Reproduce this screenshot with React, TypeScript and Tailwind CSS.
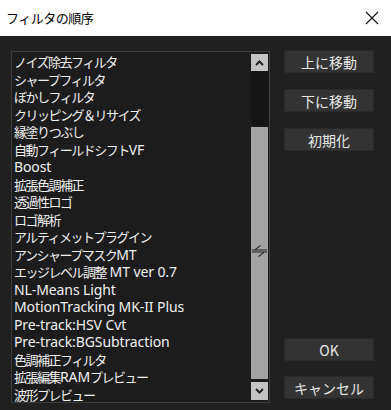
const items = [
  "ノイズ除去フィルタ",
  "シャープフィルタ",
  "ぼかしフィルタ",
  "クリッピング＆リサイズ",
  "縁塗りつぶし",
  "自動フィールドシフトVF",
  "Boost",
  "拡張色調補正",
  "透過性ロゴ",
  "ロゴ解析",
  "アルティメットプラグイン",
  "アンシャープマスクMT",
  "エッジレベル調整 MT ver 0.7",
  "NL-Means Light",
  "MotionTracking MK-II Plus",
  "Pre-track:HSV Cvt",
  "Pre-track:BGSubtraction",
  "色調補正フィルタ",
  "拡張編集RAMプレビュー",
  "波形プレビュー",
]

const cjk = { fontFamily: '"Noto Sans CJK JP", "Noto Sans", sans-serif' }
const latin = { fontFamily: '"Noto Sans", "Noto Sans CJK JP", sans-serif' }

// split a label into latin / japanese runs so each gets its own size
const Label = ({text}: {text: string}) => {
  const parts = text.match(/[\x20-\x7E]+|[^\x20-\x7E]+/g) || []
  return (
    <>
      {parts.map((p, i) =>
        /^[\x20-\x7E]+$/.test(p) ? (
          <span key={i} style={latin} className="text-[14px] tracking-[-0.1px] whitespace-pre">{p}</span>
        ) : (
          <span key={i} style={cjk} className="text-[13px] tracking-[-1.5px]">{p}</span>
        )
      )}
    </>
  )
}

const Btn = ({label}: {label: string}) => (
  <button className="w-[90px] h-[23px] bg-[#333333] border border-[#2a2a2a] text-[#e8e8e8] text-[14px] leading-none flex items-center justify-center">
    {label}
  </button>
)

const App = () => {
  return (
    <div className="w-[391px] h-[410px] bg-[#202020] flex flex-col" style={cjk}>
      <div className="h-[36px] bg-white flex items-center justify-between pl-[6px] pr-[10px]">
        <span className="text-[13px] text-black tracking-[-0.5px]">フィルタの順序</span>
        <svg width="16" height="16" viewBox="0 0 16 16" className="mr-[1px]">
          <path d="M2 2 L14 14 M14 2 L2 14" stroke="#111" strokeWidth="1.1" fill="none"/>
        </svg>
      </div>
      <div className="flex pt-[15px] pl-[11px]">
        <div className="w-[259px] h-[352px] border border-[#3c3c3c] bg-[#1c1c1c] flex">
          <ul className="flex-1 pl-[2px] pt-[1px] text-[#f0f0f0] whitespace-nowrap overflow-hidden">
            {items.map((t) => (
              <li key={t} className="h-[17.5px] flex items-center"><Label text={t} /></li>
            ))}
          </ul>
          <div className="w-[17px] flex flex-col pt-[2px] pb-[2px] mr-[1px]">
            <div className="h-[17px] bg-[#c4c4c4] flex items-center justify-center">
              <svg width="9" height="6" viewBox="0 0 9 6"><path d="M1 5 L4.5 1.5 L8 5" stroke="#222" strokeWidth="2" fill="none"/></svg>
            </div>
            <div className="h-[55px] bg-[#151515]"></div>
            <div className="flex-1 bg-[#a3a3a3] flex items-center justify-center mt-[1px]">
              <svg width="18" height="14" viewBox="0 0 18 14" className="-mt-[5px]">
                <path d="M4 6 L10 1 M1 6 L17 6 M17 8 L1 8 M14 8 L8 13" stroke="#222" strokeWidth="1.1" fill="none"/>
              </svg>
            </div>
            <div className="h-[18px] bg-[#c4c4c4] flex items-center justify-center mt-[3px]">
              <svg width="9" height="6" viewBox="0 0 9 6"><path d="M1 1 L4.5 4.5 L8 1" stroke="#222" strokeWidth="2" fill="none"/></svg>
            </div>
          </div>
        </div>
        <div className="flex flex-col ml-[14px]">
          <div className="flex flex-col gap-[16px] -mt-[1px]">
            <Btn label="上に移動" />
            <Btn label="下に移動" />
            <Btn label="初期化" />
          </div>
          <div className="flex flex-col gap-[15px] mt-[187px]">
            <Btn label="OK" />
            <Btn label="キャンセル" />
          </div>
        </div>
      </div>
    </div>
  )
}
export default App
